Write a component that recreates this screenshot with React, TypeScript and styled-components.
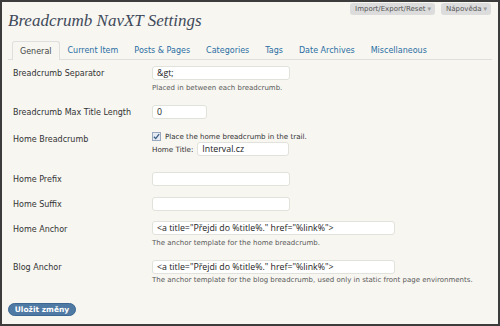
import * as React from "react";
import styled, { createGlobalStyle } from "styled-components";

const GlobalStyle = createGlobalStyle`
  html, body {
    margin: 0;
    padding: 0;
    background: #f7f6f1;
  }
  * {
    box-sizing: border-box;
  }
`;

const tabs = [
  "General",
  "Current Item",
  "Posts & Pages",
  "Categories",
  "Tags",
  "Date Archives",
  "Miscellaneous",
];

const anchorValue = '<a title="Přejdi do %title%." href="%link%">';

function App() {
  return (
    <>
      <GlobalStyle />
      <Frame>
        <TopLinks>
          <MetaButton>
            Import/Export/Reset <Caret>▾</Caret>
          </MetaButton>
          <MetaButton>
            Nápověda <Caret>▾</Caret>
          </MetaButton>
        </TopLinks>
        <Title>Breadcrumb NavXT Settings</Title>
        <TabBar>
          {tabs.map((tab, i) => (
            <Tab key={tab} $active={i === 0}>
              {tab}
            </Tab>
          ))}
        </TabBar>

        <Form>
          <Row $gap={12}>
            <Label>Breadcrumb Separator</Label>
            <Field>
              <TextInput $width={138}>&amp;gt;</TextInput>
              <Description>Placed in between each breadcrumb.</Description>
            </Field>
          </Row>
          <Row $gap={12}>
            <Label>Breadcrumb Max Title Length</Label>
            <Field>
              <TextInput $width={55}>0</TextInput>
            </Field>
          </Row>
          <Row $gap={16}>
            <Label $offset={1}>Home Breadcrumb</Label>
            <Field>
              <CheckLine>
                <Checkbox>
                  <svg width="7" height="7" viewBox="0 0 8 8">
                    <path
                      d="M1 4.2 L3.1 6.4 L7 1.2"
                      fill="none"
                      stroke="#3a5d86"
                      strokeWidth="1.5"
                    />
                  </svg>
                </Checkbox>
                Place the home breadcrumb in the trail.
              </CheckLine>
              <InlineField>
                <InlineLabel>Home Title:</InlineLabel>
                <TextInput $width={92}>Interval.cz</TextInput>
              </InlineField>
            </Field>
          </Row>
          <Row $gap={11}>
            <Label>Home Prefix</Label>
            <Field>
              <TextInput $width={138} />
            </Field>
          </Row>
          <Row $gap={10}>
            <Label>Home Suffix</Label>
            <Field>
              <TextInput $width={138} />
            </Field>
          </Row>
          <Row $gap={12}>
            <Label $offset={1}>Home Anchor</Label>
            <Field>
              <TextInput $width={243}>{anchorValue}</TextInput>
              <Description>The anchor template for the home breadcrumb.</Description>
            </Field>
          </Row>
          <Row $gap={0}>
            <Label>Blog Anchor</Label>
            <Field>
              <TextInput $width={243}>{anchorValue}</TextInput>
              <Description $tight>
                The anchor template for the blog breadcrumb, used only in static
                front page environments.
              </Description>
            </Field>
          </Row>
        </Form>

        <Footer>
          <SubmitButton>Uložit změny</SubmitButton>
        </Footer>
      </Frame>
    </>
  );
}

const Frame = styled.div`
  position: relative;
  width: 500px;
  height: 326px;
  border: 2px solid #3c3c3c;
  background: #f7f6f1;
  padding: 0 6px 0 6px;
  font-family: "DejaVu Sans", Verdana, sans-serif;
  color: #333;
  overflow: hidden;
`;

const TopLinks = styled.div`
  position: absolute;
  top: 1px;
  right: 7px;
  display: flex;
  gap: 6px;
`;

const MetaButton = styled.div`
  display: flex;
  align-items: center;
  gap: 2px;
  height: 12px;
  padding: 0 4px 0 5px;
  background: #dcdcdc;
  border-radius: 3px;
  font-size: 7px;
  color: #555;
  white-space: nowrap;
`;

const Caret = styled.span`
  color: #9a9a9a;
  font-size: 7px;
`;

const Title = styled.h2`
  margin: 0;
  padding: 9px 0 0 0;
  height: 39px;
  font-family: "Liberation Serif", Georgia, serif;
  font-style: italic;
  font-weight: normal;
  font-size: 17px;
  color: #3f4a5a;
`;

const TabBar = styled.div`
  display: flex;
  align-items: flex-end;
  height: 19px;
  padding-left: 4px;
  border-bottom: 1px solid #dfdfdf;
`;

const Tab = styled.div<{ $active?: boolean }>`
  height: ${(p) => (p.$active ? "19px" : "18px")};
  padding: 0 7px;
  display: flex;
  align-items: center;
  font-size: 8px;
  white-space: nowrap;
  color: ${(p) => (p.$active ? "#464646" : "#2a6ea3")};
  background: #f7f6f1;
  border: 1px solid ${(p) => (p.$active ? "#dfdfdf" : "transparent")};
  border-bottom: none;
  border-radius: 3px 3px 0 0;
  margin-bottom: ${(p) => (p.$active ? "-1px" : "0")};
`;

const Form = styled.div`
  display: flex;
  flex-direction: column;
  padding-top: 6px;
  padding-left: 5px;
`;

const Row = styled.div<{ $gap: number }>`
  display: grid;
  grid-template-columns: 139px 1fr;
  align-items: start;
  padding-bottom: ${(p) => p.$gap}px;
`;

const Label = styled.div<{ $offset?: number }>`
  font-size: 8px;
  line-height: 10px;
  color: #333;
  padding-top: ${(p) => 3 + (p.$offset ?? 0)}px;
  white-space: nowrap;
`;

const Field = styled.div`
  display: flex;
  flex-direction: column;
  align-items: flex-start;
`;

const TextInput = styled.div<{ $width: number }>`
  width: ${(p) => p.$width}px;
  height: 14px;
  padding: 0 4px;
  display: flex;
  align-items: center;
  background: #fff;
  border: 1px solid #e2e2dc;
  border-radius: 3px;
  font-family: "Open Sans", "DejaVu Sans", sans-serif;
  font-size: 8.8px;
  color: #222;
  white-space: nowrap;
  overflow: hidden;
`;

const Description = styled.div<{ $tight?: boolean }>`
  margin-top: ${(p) => (p.$tight ? 1 : 3)}px;
  font-size: 7px;
  line-height: 10px;
  color: #5a5a5a;
  white-space: nowrap;
`;

const CheckLine = styled.label`
  display: flex;
  align-items: center;
  gap: 4px;
  height: 10px;
  font-size: 7.1px;
  color: #333;
  white-space: nowrap;
`;

const Checkbox = styled.span`
  width: 9px;
  height: 9px;
  display: flex;
  align-items: center;
  justify-content: center;
  background: #e6ebf3;
  border: 1px solid #9aa8bd;
`;

const InlineField = styled.div`
  display: flex;
  align-items: center;
  gap: 4px;
  margin-top: 1px;
`;

const InlineLabel = styled.span`
  font-size: 7.2px;
  color: #333;
`;

const Footer = styled.div`
  padding-top: 12px;
  padding-left: 0;
`;

const SubmitButton = styled.div`
  display: inline-flex;
  align-items: center;
  justify-content: center;
  width: 68px;
  height: 13px;
  border-radius: 7px;
  background: #4f7aa4;
  border: 1px solid #3d6792;
  color: #fff;
  font-size: 7.5px;
  font-weight: bold;
  white-space: nowrap;
`;

export default App;
